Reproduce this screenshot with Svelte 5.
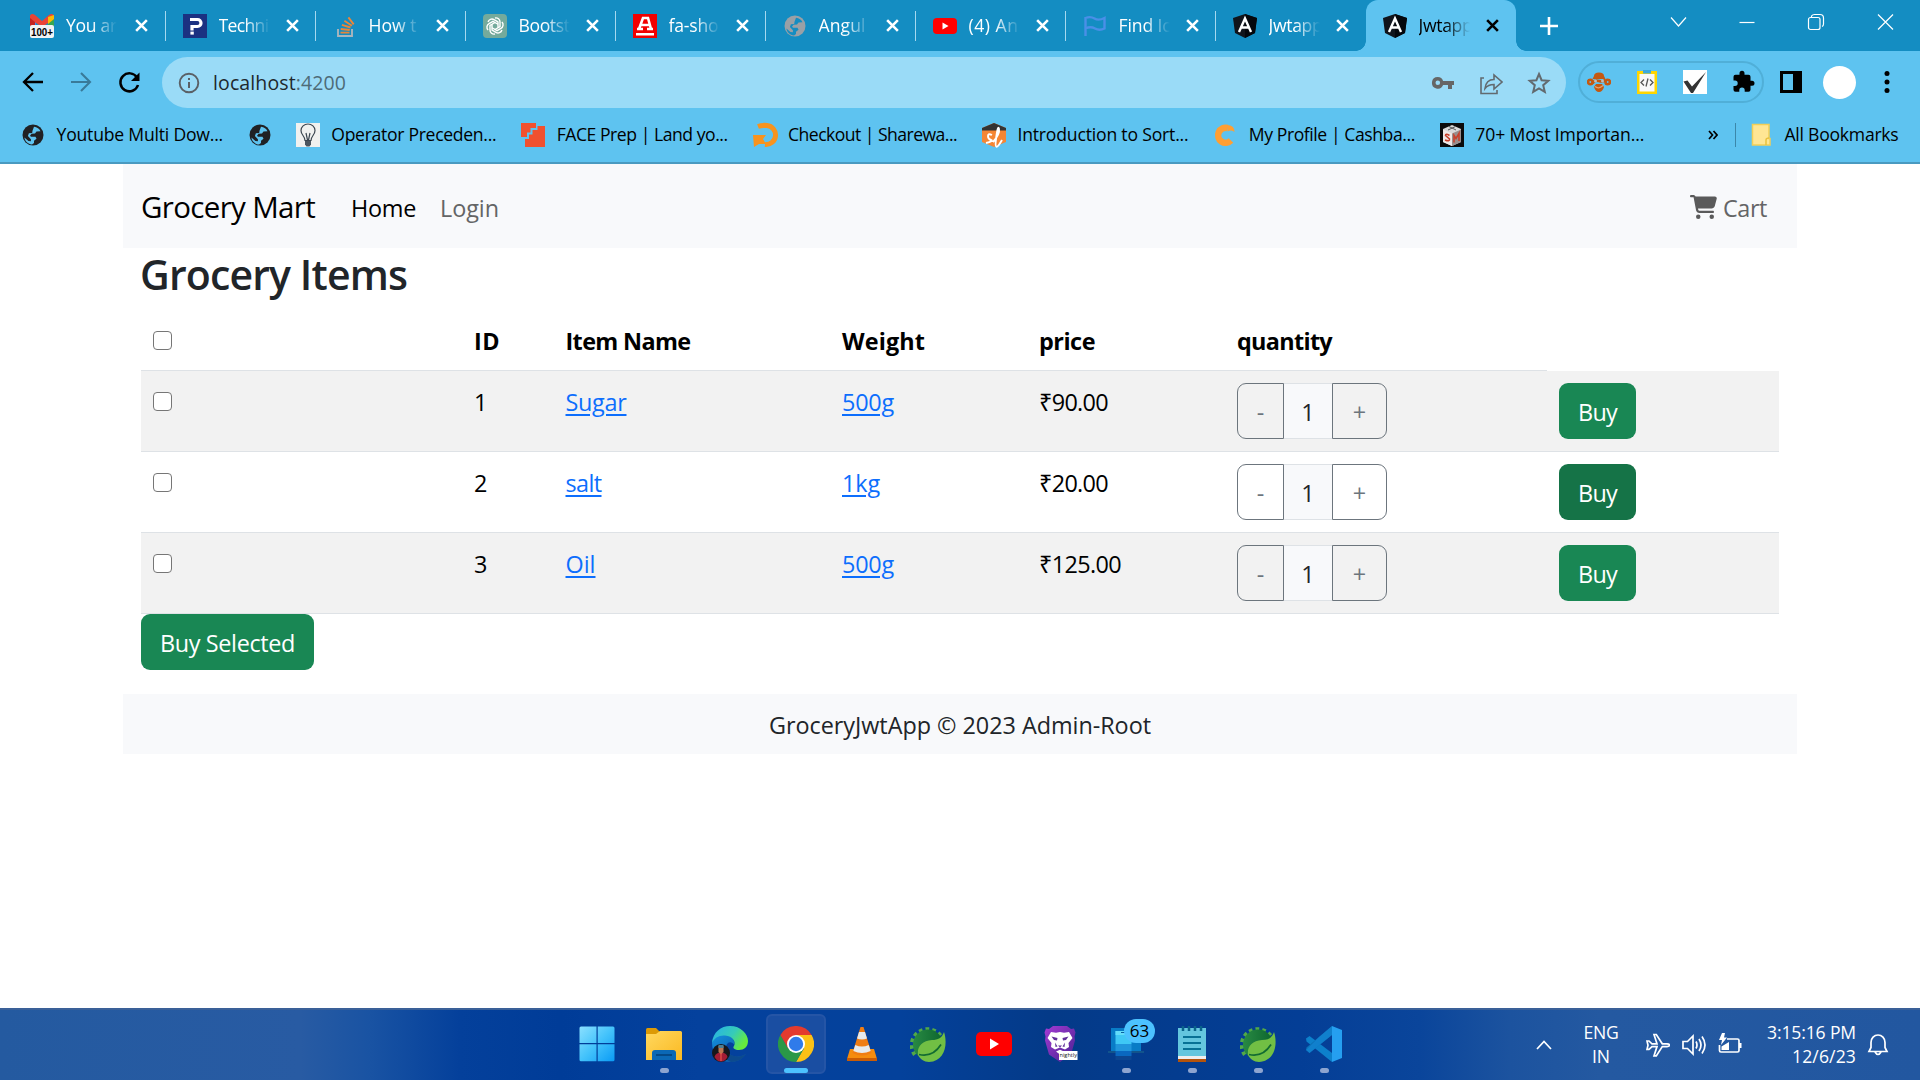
<script lang="ts">
  const tabs = [
    { icon: 'gmail', title: 'You ar', w: 51 },
    { icon: 'prep', title: 'Techni', w: 50 },
    { icon: 'stack', title: 'How t', w: 48 },
    { icon: 'gpt', title: 'Bootst', w: 51 },
    { icon: 'fa', title: 'fa-sho', w: 50 },
    { icon: 'globegrey', title: 'Angul', w: 47 },
    { icon: 'youtube', title: '(4) An', w: 50 },
    { icon: 'flag', title: 'Find Ic', w: 52 },
    { icon: 'angular', title: 'Jwtapp', w: 54 },
    { icon: 'angular', title: 'Jwtapp', w: 54, active: true }
  ];

  const bookmarks = [
    { icon: 'globe', title: 'Youtube Multi Dow...', w: 167.500 },
    { icon: 'globe', title: '', w: 0 },
    { icon: 'bulb', title: 'Operator Preceden...', w: 166 },
    { icon: 'face', title: 'FACE Prep | Land yo...', w: 172 },
    { icon: 'share', title: 'Checkout | Sharewa...', w: 170 },
    { icon: 'sort', title: 'Introduction to Sort...', w: 172 },
    { icon: 'cash', title: 'My Profile | Cashba...', w: 167 },
    { icon: 'stm', title: '70+ Most Importan...', w: 170 }
  ];

  const items = [
    { id: 1, name: 'Sugar', nw: 61, weight: '500g', ww: 52, price: '₹90.00', pw: 69 },
    { id: 2, name: 'salt', nw: 36, weight: '1kg', ww: 38, price: '₹20.00', pw: 69, hover: true },
    { id: 3, name: 'Oil', nw: 30, weight: '500g', ww: 52, price: '₹125.00', pw: 82 }
  ];

  const apps = [
    { icon: 'start' },
    { icon: 'folder', open: true },
    { icon: 'edge' },
    { icon: 'chrome', active: true },
    { icon: 'vlc' },
    { icon: 'spring' },
    { icon: 'yt' },
    { icon: 'brave' },
    { icon: 'phone', open: true, badge: '63' },
    { icon: 'notepad', open: true },
    { icon: 'spring', open: true },
    { icon: 'vscode', open: true }
  ];

  // Spaces the letters so that the label takes the given width.
  function fit(node: HTMLElement, width: number) {
    const n = node.textContent?.trim().length ?? 0;
    if (!n || !width) return;
    const natural = node.getBoundingClientRect().width;
    node.style.letterSpacing = `${(width - natural) / n}px`;
  }
</script>

{#snippet label(text, width)}<span class="fit" use:fit={width}>{text}</span>{/snippet}

{#snippet favicon(name)}
  <svg class="fav" viewBox="0 0 24 24">
    {#if name === 'gmail'}
      <path d="M0 4v8h6V4z" fill="#4285f4" /><path d="M18 4v8h6V4z" fill="#34a853" />
      <path d="M0 1.500Q2-1 5 1l7 6 7-6q3-2 5 .5V5L12 13 0 5z" fill="#ea4335" />
      <path d="M18 3l6-2v4l-6 5z" fill="#fbbc04" /><path d="M0 4l5 4v4H0z" fill="#c5221f" />
      <rect y="11" width="24" height="13" rx="2" fill="#f1f3f4" />
      <text x="12" y="21.800" text-anchor="middle" textLength="22" lengthAdjust="spacingAndGlyphs" class="badge-text">100+</text>
    {:else if name === 'prep'}
      <rect width="24" height="24" fill="#1b3181" />
      <path d="M7 5.500h7.500a3.500 3.500 0 0 1 0 7H9v4" fill="none" stroke="#fff" stroke-width="3.200" /><rect x="7.400" y="17.600" width="3.400" height="3" fill="#fff" />
    {:else if name === 'stack'}
      <path d="M5 15v7h14v-7" fill="none" stroke="#a9b5bd" stroke-width="1.900" />
      <path d="M7.500 18.600h9M7.700 15l9 1M8.900 10.900l8.600 2.600M11.400 6.800l7.500 5M15.400 3.400l5.300 7" stroke="#e98638" stroke-width="1.900" />
    {:else if name === 'gpt'}
      <rect width="24" height="24" rx="4" fill="#74aa9c" />
      <g fill="none" stroke="#fff" stroke-width="1.400">
        {#each [0, 60, 120, 180, 240, 300] as a}
          <path d="M12 4a4 4 0 0 1 5 4v4.500l-5 3" transform="rotate({a} 12 12)" />
        {/each}
      </g>
    {:else if name === 'fa'}
      <rect width="24" height="24" fill="#f20000" />
      <path d="M6 15L10 4h5l3 11M8 11h8M4 15h6M14 15h6" fill="none" stroke="#fff" stroke-width="2.600" /><rect x="3" y="19" width="18" height="2.500" fill="#fff" />
    {:else if name === 'globegrey' || name === 'globe'}
      <circle cx="12" cy="12" r="10.500" fill={name === 'globe' ? '#202124' : '#9aa0a6'} />
      <path d="M13 3.800c3 .2 5.500 2 6.500 4.400l-4 .3-1.500 2-3.500.3-1.500 2 1 1h4.500l1 2-2.500 2v2.300l-2 1.500c-4-.5-7.200-3.300-7.600-7l4 3.400 2.500.2v-2l-3-3.200 1-2.700 3.300-.3.300-2.200z" fill={name === 'globe' ? '#5ec3f0' : '#148dc2'} />
    {:else if name === 'youtube'}
      <rect y="4" width="24" height="16" rx="4" fill="#f00" /><path d="M9.500 8.500v7l6-3.500z" fill="#fff" />
    {:else if name === 'flag'}
      <path d="M2.500 22V3M2.500 4q5-2 9 .5t10-.5v10.500q-5 2.500-9.500 0t-9.500 0" fill="none" stroke="#4a8fe7" stroke-width="2.400" />
    {:else if name === 'angular'}
      <path d="M12 0l12 4-2 15-10 5L2 19 0 4z" fill="#10141b" /><path d="M12 0l12 4-2 15-10 5z" fill="#04070c" />
      <path d="M6 18l6-13.500L18 18M8.500 13.500h7" fill="none" stroke="#fff" stroke-width="2.400" />
    {:else if name === 'bulb'}
      <rect width="24" height="24" fill="#f1f1ef" />
      <path d="M9 17.500C9 13 5 12 5 7.500a7 6.500 0 0 1 14 0C19 12 15 13 15 17.500zM10 10l1.500 7M14 10l-1.500 7" fill="none" stroke="#3c4650" stroke-width="1.200" /><path d="M9 18h6v3.500l-1.500 2h-3L9 21.500z" fill="#4b555e" />
    {:else if name === 'face'}
      <path d="M0 0h15v5H9.500v4.500H6V14H0z" fill="#f1502f" /><path d="M16.500 3H24v21H4v-8h4v-4.500h3.500V7h5z" fill="#f1502f" />
    {:else if name === 'share'}
      <path d="M5 3.500Q9 2 14 2.500A9.300 9.300 0 0 1 12 21.500" fill="none" stroke="#f7931e" stroke-width="5" /><path d="M0 12h13l-3 4 3 5H6l-5 3z" fill="#f7931e" />
    {:else if name === 'sort'}
      <path d="M12 0l12 5v14l-12 5L0 19V5z" fill="#f58634" /><path d="M12 0l12 5v2.500H0V5z" fill="#333" />
      <path d="M10 12q-4-2-4 1t3 4-5 3M11 19q7-8 6-13t-3 10 6 1" fill="none" stroke="#fff" stroke-width="1.900" />
    {:else if name === 'cash'}
      <path d="M18 17.500A7.500 7.500 0 1 1 14.500 5" fill="none" stroke="#ff9f33" stroke-width="6.500" /><path d="M14 2q7.500 0 7.500 7-3.500-2.500-7-.5z" fill="#ff9f33" />
    {:else if name === 'stm'}
      <rect width="24" height="24" fill="#0b0b0b" /><path d="M12 2l9 4v13l-9 4-9-4V6z" fill="#d9d9d9" /><path d="M3 6.500l9 4v12.500l-9-4z" fill="#f0e9e7" /><path d="M12 10.500l9-4V19l-9 4z" fill="#9a8e8c" />
      <path d="M9 3.500l7 3.500M15.500 3.500L8 7" stroke="#555" stroke-width="1" /><path d="M9.500 12.500q-4-2.500-4 0l4 3.500q.5 3-4.500 1M14 19.500v-7l2 3 3-5v7.500" fill="none" stroke="#c9402b" stroke-width="1.600" />
    {/if}
  </svg>
{/snippet}

{#snippet appicon(name)}
  <svg class="app-icon" viewBox="0 0 36 36">
    {#if name === 'start'}
      <defs><linearGradient id="win" x1="0" y1="0" x2="1" y2="1"><stop offset="0" stop-color="#8be0ff" /><stop offset=".5" stop-color="#44c3fb" /><stop offset="1" stop-color="#0a9bf5" /></linearGradient></defs>
      <path d="M2 .5h15.500V17H.5V2Q.5.500 2 .5zM18.700.500H34q1.500 0 1.500 1.500v15H18.700zM.5 18.300h17v17H2q-1.500 0-1.500-1.500zM18.700 18.300h16.800v15.500q0 1.500-1.500 1.500H18.700z" fill="url(#win)" />
    {:else if name === 'folder'}
      <defs><linearGradient id="fold" x1="0" y1="0" x2="1" y2="1"><stop offset="0" stop-color="#ffd860" /><stop offset="1" stop-color="#fbb921" /></linearGradient></defs>
      <path d="M0 3.500Q0 2 1.500 2H10l4 4v6H0z" fill="#dc9a06" /><path d="M0 8h10l4-3h20.500Q36 5 36 6.500V34H0z" fill="url(#fold)" />
      <path d="M6 34v-7q0-3 3-3h18q3 0 3 3v7z" fill="#0b68b5" /><path d="M10 29h16" stroke="#053f77" stroke-width="1.500" />
    {:else if name === 'edge'}
      <defs>
        <linearGradient id="edge1" x1="0" y1="0" x2="1" y2=".5"><stop offset="0" stop-color="#26b0ea" /><stop offset=".6" stop-color="#36cbb8" /><stop offset="1" stop-color="#66eb3d" /></linearGradient>
        <linearGradient id="edge2" x1="0" y1="0" x2="1" y2="1"><stop offset="0" stop-color="#1490df" /><stop offset="1" stop-color="#0b4f9c" /></linearGradient>
      </defs>
      <path d="M0 17C1 9 7 8.500 12 8.500c8 0 11 6 10 10-3-4-8-2-8 3 0 6 7 10 13 9 3-.4 5-1.500 7-2.500-3 5-9 8-16 8C8 36 0 28 0 17z" fill="url(#edge2)" />
      <path d="M14 21c0 6 6 10 13 9.500 3-.4 5-1.500 7-2.500-3 5-9 8-15 8-6-2-8-9-5-15z" fill="#0c4a8e" />
      <path d="M0 17C1 6 9 0 18 0c11 0 18 8 18 15 0 6-4 9-9 9-4 0-7-2-5-4 2-4-1-10-9-10.500C7 9 2 12 0 17z" fill="url(#edge1)" />
      <circle cx="9" cy="27" r="9" fill="#17171b" /><path d="M2.500 31q1-4.500 6.500-4.500t6.500 4.500q-2.500 4.500-6.500 4.500T2.500 31z" fill="#a31d35" /><path d="M6.500 20h5v6L9 28.500 6.500 26z" fill="#bc7650" /><path d="M6.500 19h5v3h-5z" fill="#4b7e94" /><path d="M9 27v8" stroke="#e9554b" stroke-width="1.200" />
    {:else if name === 'chrome'}
      <path d="M18 9h15.600A18 18 0 0 1 18 36l7.800-13.500z" fill="#fbc116" /><path d="M25.800 22.500L18 36A18 18 0 0 1 2.400 9l7.800 13.500z" fill="#2a9847" /><path d="M18 9h15.600A18 18 0 0 0 2.400 9l7.800 13.500z" fill="#e33b2e" />
      <circle cx="18" cy="18" r="9" fill="#fff" /><circle cx="18" cy="18" r="7.200" fill="#2f7bea" />
    {:else if name === 'vlc'}
      <path d="M6 23h24l3 10q.3 2-2 2H5q-2.300 0-2-2z" fill="#f58c0e" /><path d="M3 32h30v3H3z" fill="#ca5c05" />
      <path d="M16.500 1h3l8 26q-9.500 5-19 0z" fill="#f07d13" /><path d="M15 6h6l2 6.500q-5 2-10 0zM11.300 19q6.700 3 13.400 0l2 6q-8.700 4-17.400 0z" fill="#e7eaec" />
    {:else if name === 'spring'}
      <defs><linearGradient id="gear" x1="0" y1="0" x2="1" y2="0"><stop offset="0" stop-color="#288a43" /><stop offset="1" stop-color="#0d652e" /></linearGradient></defs>
      <path d="M30.500 9.500A15.500 15.500 0 1 0 5 29" fill="none" stroke="#52a947" stroke-width="4" stroke-dasharray="3.600 3" />
      <circle cx="18" cy="18.500" r="15" fill="url(#gear)" />
      <path d="M34 6c4 12 1 29-15 30-5 0-9-3-11-7C7 20 12 15 22 14c6 0 10-2 12-8z" fill="#71bf44" /><path d="M9 28.500c9 2 17-2 22-10" fill="none" stroke="#126b31" stroke-width="1.700" />
    {:else if name === 'yt'}
      <rect y="6" width="36" height="24" rx="5" fill="#f00" /><path d="M14 12.500v11l9-5.500z" fill="#fff" />
    {:else if name === 'brave'}
      <defs><linearGradient id="brv" x1="0" y1="0" x2="1" y2="1"><stop offset="0" stop-color="#a43bd4" /><stop offset="1" stop-color="#482290" /></linearGradient></defs>
      <path d="M11 0h14l4 3 3-.5 1.500 4-1 4 .5 4-4 14-11 7.500L7 28.500 3 14.500l.5-4-1-4 1.500-4L7 3z" fill="url(#brv)" />
      <path d="M9 6l5 .8 4-.8 4 .8 5-.8 3.500 6-4 5 .5 4-4 2.500-5-2-5 2L9 21l.5-4-4-5zM14 25.500l4-1.700 4 1.700-4 3z" fill="#fff" />
      <path d="M9.500 10.500l6 1.500-.5 2.500-3-.5zM26.500 10.500l-6 1.500.5 2.500 3-.5zM13 16.500l2.500 4-2 .5zM23 16.500l-2.500 4 2 .5zM16 19.500h4l-2 2z" fill="#62309b" />
      <rect x="17" y="25" width="18.500" height="9" fill="#fff" /><text x="26.300" y="31.300" text-anchor="middle" class="nightly">nightly</text>
    {:else if name === 'phone'}
      <path d="M3 2h30v24H3z" fill="#087cc7" /><path d="M0 25h36v2H0z" fill="#12548c" /><path d="M7.500 5h16v13h-16z" fill="#3fc8f5" /><path d="M7.500 5h16v4h-16z" fill="#63dcfa" /><path d="M7.500 18h16v7h-16z" fill="#2196dc" /><path d="M7.500 25h16v5h-16z" fill="#0a68c0" /><path d="M7.500 30h16v4h-16z" fill="#0c4590" /><path d="M13 6.500h5" stroke="#0b5f9e" />
    {:else if name === 'notepad'}
      <path d="M4 2h28v29H4z" fill="#64c6de" /><path d="M4 30h28v3H4z" fill="#eee" /><path d="M4 33h28v3H4z" fill="#b4530b" />
      <path d="M9 0v5M15 0v5M21 0v5M27 0v5" stroke="#096389" stroke-width="2.500" /><path d="M9 11h18M9 17h18M9 23h18" stroke="#087195" stroke-width="2" />
    {:else if name === 'vscode'}
      <path d="M0 12.500l3.500-2.500L26 27v9L.5 15.500z" fill="#0d80cb" /><path d="M.5 21.500L26 0v9L3.500 27 0 24z" fill="#0b70b6" /><path d="M0 24l3.500 3L26 9V0L13 11z" fill="#148bdc" opacity=".6" /><path d="M26 0l10 4v28l-10 4z" fill="#259ff0" />
    {/if}
  </svg>
{/snippet}

<div class="screen">
  <div class="tabstrip">
    {#each tabs as tab}
      <div class="tab" class:active={tab.active}>
        {@render favicon(tab.icon)}
        <div class="tab-title">{@render label(tab.title, tab.w)}</div>
        <svg class="close" viewBox="0 0 14 14"><path d="M2 2l10 10M12 2L2 12" stroke="currentColor" stroke-width="2.400" /></svg>
      </div>
    {/each}
    <svg class="plus" viewBox="0 0 18 18"><path d="M9 0v18M0 9h18" stroke="#fff" stroke-width="2.600" /></svg>
    <div class="window-controls">
      <svg viewBox="0 0 18 18"><path d="M2 4.500L9.500 13 17 4.500" /></svg>
      <svg viewBox="0 0 18 18"><path d="M1.500 9.500h15" /></svg>
      <svg viewBox="0 0 18 18"><rect x="1.500" y="4.500" width="11.500" height="12" rx="2" /><path d="M4.500 4V3q1-1.500 3-1.500h5.500q3.500 0 3.500 3.500v6q0 2-1.500 2.500" /></svg>
      <svg viewBox="0 0 18 18"><path d="M2 1.500l15 15M17 1.500l-15 15" /></svg>
    </div>
  </div>

  <div class="toolbar">
    <div class="nav-buttons">
      <svg viewBox="0 0 24 24"><path d="M22 12H3.500M12 3l-9 9 9 9" fill="none" stroke="#000" stroke-width="2.300" /></svg>
      <svg viewBox="0 0 24 24"><path d="M2 12h18.500M12 3l9 9-9 9" fill="none" stroke="#397a99" stroke-width="2.100" /></svg>
      <svg viewBox="0 0 24 24"><path d="M21 15a9 9 0 1 1-1-7.500" fill="none" stroke="#000" stroke-width="2.500" /><path d="M22.500 2.500V11H14z" /></svg>
    </div>
    <div class="omnibox">
      <svg class="i24" viewBox="0 0 24 24"><circle cx="12" cy="12" r="9.300" fill="none" stroke="#5a6066" stroke-width="1.900" /><path d="M12 11v6M12 7v2" stroke="#5a6066" stroke-width="2" /></svg>
      <div class="url"><span class="fit" use:fit={133}>localhost<i>:4200</i></span></div>
      <div class="omni-actions">
        <svg class="i24" viewBox="0 0 24 24"><path d="M6.800 6a5.700 5.700 0 0 1 5.300 4H23v4h-2v4h-4v-4h-4.900A5.800 5.800 0 1 1 6.800 6zm0 3.500a2.300 2.300 0 1 0 0 4.600 2.300 2.300 0 0 0 0-4.600z" fill="#666" fill-rule="evenodd" /></svg>
        <svg class="i24" viewBox="0 0 24 24"><path d="M5 7H2v15.500h16V19M6 17.500q1-9 9-9V4l8 7-8 7v-4.500q-6 0-9 4z" fill="none" stroke="#626a6f" stroke-width="1.600" /></svg>
        <svg class="i24" viewBox="0 0 24 24"><path d="M12 3l2.600 6.200 6.700.6-5.100 4.400 1.600 6.600-5.800-3.500-5.800 3.500 1.600-6.600-5.100-4.400 6.700-.6z" fill="none" stroke="#626a6f" stroke-width="2" /></svg>
      </div>
    </div>
    <div class="extensions">
      <svg class="i24" viewBox="0 0 24 24"><path d="M7 6q0-3.500 5-3.500T17 6l1.500 3h-13zM7 17q1.500 5 5 5t5-5l-2-3H9z" fill="#c45911" /><g fill="none" stroke="#c45911" stroke-width="2.600"><circle cx="3.300" cy="12" r="2.200" /><circle cx="20.700" cy="12" r="2.200" /><path d="M5.500 13.500q2-4 6.500-2.500t6.500-1.500" /></g><circle cx="8.500" cy="11" r="1.500" fill="#b9bfc0" /><circle cx="15.500" cy="11" r="1.500" fill="#b9bfc0" /><path d="M8 16.500q4 3 8-1" fill="none" stroke="#e1a272" stroke-width="1.200" /></svg>
      <svg class="i24" viewBox="0 0 24 24"><path d="M2 1h20v23H2z" fill="#ffd500" /><path d="M4.500 4h15v17.500h-15z" fill="#f8f8f8" /><path d="M8 0h8v3.500H8z" fill="#3aa9e0" /><path d="M9 9.500L6 12.500l3 3M15 9.500l3 3-3 3M13 8.500l-2 8" fill="none" stroke="#555" stroke-width="1.300" /></svg>
      <svg class="i24" viewBox="0 0 24 24"><path d="M0 0h24v24H0z" fill="#fff" /><path d="M.5 11.500l4-1 4.500 6L23 2 10 23H8z" fill="#333" /></svg>
      <svg class="i24" viewBox="0 0 24 24"><path d="M20.500 11H19V7a2 2 0 0 0-2-2h-4V3.500a2.500 2.500 0 0 0-5 0V5H4a2 2 0 0 0-2 2v3.800h1.500a2.700 2.700 0 0 1 0 5.400H2V20a2 2 0 0 0 2 2h3.800v-1.500a2.700 2.700 0 0 1 5.400 0V22H17a2 2 0 0 0 2-2v-4h1.500a2.500 2.500 0 0 0 0-5z" transform="translate(.5 -.3)" /></svg>
    </div>
    <svg class="i24 side" viewBox="0 0 24 24"><path d="M1 1h22v22H1zM4 4v16h10V4z" fill-rule="evenodd" /></svg>
    <div class="avatar"></div>
    <svg class="i24 more" viewBox="0 0 24 24"><circle cx="12" cy="3.500" r="2.500" /><circle cx="12" cy="12" r="2.500" /><circle cx="12" cy="20.500" r="2.500" /></svg>
  </div>

  <div class="bookmarks">
    {#each bookmarks as b}
      <div class="bookmark">
        {@render favicon(b.icon)}
        {#if b.title}<div class="bm-title" style:width="{b.w}px">{@render label(b.title, b.w - 1)}</div>{/if}
      </div>
    {/each}
    <div class="all-bookmarks">
      <svg class="dbl" viewBox="0 0 10 10"><path d="M1 1l3.500 4L1 9M5.500 1L9 5 5.500 9" fill="none" stroke="#000" stroke-width="1.700" /></svg>
      <div class="bm-sep"></div>
      <svg class="i24" viewBox="0 0 24 24"><path d="M3.500 1.500h16.500v14h1v6.500H3.500z" fill="#ffe694" stroke="#f2cf57" stroke-width="1.500" /><path d="M17 22v-5q0-2 3-2" fill="none" stroke="#e9c23e" stroke-width="1.500" /></svg>
      <div class="bm-title">{@render label('All Bookmarks', 114)}</div>
    </div>
  </div>

  <main>
    <nav>
      <span class="brand">{@render label('Grocery Mart', 174)}</span>
      <span class="nav-link on">{@render label('Home', 65)}</span>
      <span class="nav-link">{@render label('Login', 59)}</span>
      <span class="nav-link cart">
        <svg viewBox="0 0 576 512"><path fill="#5a5a5a" d="M0 24C0 10.700 10.700 0 24 0h45.500c22 0 41.500 12.800 50.600 32h411c26.300 0 45.500 25 38.600 50.400l-41 152.300c-8.500 31.400-37 53.300-69.500 53.300H170.700l5.400 28.500c2.200 11.300 12.100 19.500 23.600 19.500H488c13.300 0 24 10.700 24 24s-10.700 24-24 24H199.700c-34.600 0-64.300-24.600-70.700-58.500L77.400 54.500c-.7-3.800-4-6.500-7.900-6.500H24C10.700 48 0 37.300 0 24zM128 464a48 48 0 1 1 96 0 48 48 0 1 1-96 0zm336-48a48 48 0 1 1 0 96 48 48 0 1 1 0-96z" /></svg>
        {@render label('Cart', 44)}
      </span>
    </nav>

    <section>
      <h3>{@render label('Grocery Items', 267)}</h3>
      <div class="row head">
        <div class="cell"><input type="checkbox" /></div>
        <div class="cell id">{@render label('ID', 26)}</div>
        <div class="cell">{@render label('Item Name', 125)}</div>
        <div class="cell">{@render label('Weight', 83)}</div>
        <div class="cell">{@render label('price', 56)}</div>
        <div class="cell">{@render label('quantity', 95)}</div>
      </div>
      {#each items as item, i}
        <div class="row" class:striped={i % 2 === 0}>
          <div class="cell"><input type="checkbox" /></div>
          <div class="cell id">{item.id}</div>
          <div class="cell"><span class="fit link" use:fit={item.nw}>{item.name}</span></div>
          <div class="cell"><span class="fit link" use:fit={item.ww}>{item.weight}</span></div>
          <div class="cell">{@render label(item.price, item.pw)}</div>
          <div class="cell ctl">
            <div class="stepper"><button class="minus">-</button><div class="count">1</div><button class="add">+</button></div>
          </div>
          <div class="cell ctl"><button class="btn" class:hover={item.hover}>{@render label('Buy', 39)}</button></div>
        </div>
      {/each}
      <button class="btn wide">{@render label('Buy Selected', 135)}</button>
    </section>

    <footer>{@render label('GroceryJwtApp © 2023 Admin-Root', 382)}</footer>
  </main>

  <div class="taskbar">
    <div class="apps">
      {#each apps as app}
        <div class="app" class:active={app.active} class:open={app.open}>
          {@render appicon(app.icon)}
          {#if app.badge}<span class="badge">{app.badge}</span>{/if}
        </div>
      {/each}
    </div>
    <div class="tray">
      <svg class="up" viewBox="0 0 16 10"><path d="M1 9l7-7.500L15 9" /></svg>
      <div class="lang"><span>{@render label('ENG', 35)}</span><span>{@render label('IN', 18)}</span></div>
      <div class="status">
        <svg viewBox="0 0 24 24"><path d="M1 8h2l3 2.800h5L8 1.500h2.300l6 9.300H21q2.500.2 2.500 1.400T21 13.600h-4.700l-6 9.300H8l3-9.300H6L3 16.400H1l1-4.200z" /></svg>
        <svg viewBox="0 0 24 24"><path d="M1 8.500h4.500L11 3v18l-5.500-5.500H1zM14 8.500q2 3.500 0 7M17 6q4 6 0 12M20 3.500q6 8.500 0 17" /></svg>
        <svg viewBox="0 0 24 24"><path d="M9 6h10.500q1.500 0 1.500 1.500v10q0 1.500-1.500 1.500H3q-1.500 0-1.500-1.500V12" /><path d="M21 10h2.500v5H21zM3.500 17V13.500L11 9v8zM4 0h3L6 4.500h3L3 12l1-5H1z" fill="#fff" stroke="none" /></svg>
      </div>
      <div class="clock"><span>{@render label('3:15:16 PM', 89)}</span><span>{@render label('12/6/23', 64)}</span></div>
      <svg class="bell" viewBox="0 0 22 24"><path d="M2 18.500l2-4V9.500a7 7.500 0 0 1 14 0v5l2 4zM8 19q3 5 6 0" /></svg>
    </div>
  </div>
</div>

<style>
  :global(body) { margin: 0; background: #fff; overflow: hidden; }
  .screen { width: 1920px; height: 1080px; display: flex; flex-direction: column; font-family: 'Open Sans', 'Noto Sans', sans-serif; font-size: 17.600px; color: #000; }
  svg { display: block; flex: none; }
  .fit { display: inline-block; white-space: nowrap; }
  .i24, .fav { width: 24px; height: 24px; }
  .fav { overflow: visible; }
  .badge-text { font: 700 11px 'Liberation Sans', sans-serif; fill: #000; }
  .nightly { font: 5.600px 'Open Sans', sans-serif; fill: #111; }

  .tabstrip { height: 51px; flex: none; background: #148dc2; display: flex; align-items: center; padding-left: 16px; color: #fff; }
  .tab { position: relative; box-sizing: border-box; width: 150px; height: 51px; display: flex; align-items: center; padding-left: 16.500px; }
  .tab:first-child { padding-left: 14px; }
  .tab:first-child .close { margin-left: 13px; }
  .tab:not(.active)::after { content: ''; position: absolute; right: 0; top: 11px; width: 1.500px; height: 30px; background: #a5d8ef; }
  .tab:nth-child(9)::after { display: none; }
  .tab.active { background: #5ec3f0; color: #000; border-radius: 12px 12px 0 0; }
  .tab.active::before { content: ''; position: absolute; left: -10px; right: -10px; bottom: 0; height: 10px; background: radial-gradient(circle at 0 0, transparent 9.500px, #5ec3f0 10px) left / 10px 10px no-repeat, radial-gradient(circle at 100% 0, transparent 9.500px, #5ec3f0 10px) right / 10px 10px no-repeat; }
  .tab-title { width: 55px; margin-left: 12px; padding-bottom: 1.500px; mask-image: linear-gradient(90deg, #000 26px, transparent 51px); }
  .close { width: 15px; height: 15px; margin-left: 11.500px; }
  .plus { width: 18px; height: 18px; margin-left: 24px; }
  .window-controls { margin-left: auto; margin-right: 26px; display: flex; gap: 51px; padding-bottom: 8px; }
  .window-controls svg { width: 18px; height: 18px; fill: none; stroke: #fff; stroke-width: 1.200; }

  .toolbar { height: 62px; flex: none; background: #5ec3f0; display: flex; align-items: center; }
  .nav-buttons { display: flex; gap: 24px; padding-left: 21px; width: 141px; }
  .nav-buttons svg { width: 24px; height: 24px; }
  .omnibox { width: 1404px; height: 51px; box-sizing: border-box; border-radius: 26px; background: #9adbf7; display: flex; align-items: center; padding: 0 15px; margin-top: 1px; }
  .url { margin-left: 12px; margin-top: -1px; font-size: 19.500px; color: #20282c; }
  .url i { font-style: normal; color: #4d6b78; }
  .omni-actions { margin-left: auto; display: flex; gap: 24px; }
  .extensions { box-sizing: border-box; width: 186px; height: 42px; margin-left: 12px; border: 2px solid #50afd8; border-radius: 21px; display: flex; align-items: center; gap: 24px; padding-left: 7px; }
  .side { margin-left: 15px; }
  .avatar { width: 33px; height: 33px; border-radius: 50%; background: #fff; margin-left: 20px; }
  .more { margin-left: 19px; }

  .bookmarks { height: 51px; flex: none; box-sizing: border-box; border-bottom: 2px solid #4a9ac0; background: #5ec3f0; display: flex; align-items: center; gap: 23.900px; padding: 0 21.500px 6px 21px; }
  .bookmark, .all-bookmarks { display: flex; align-items: center; gap: 11.500px; }
  .bm-title { white-space: nowrap; padding-bottom: 1px; }
  .all-bookmarks { margin-left: auto; }
  .dbl { width: 10px; height: 10px; margin-right: 5px; }
  .bm-sep { width: 1px; height: 24px; background: #3b87aa; margin-right: 2px; }

  main { flex: 1; width: 1674px; margin: 0 auto; color: #212529; font-size: 23.400px; line-height: 36px; }
  nav { height: 84px; box-sizing: border-box; background: #f8f9fb; display: flex; align-items: center; padding: 2px 30px 0 18px; }
  .brand { font-size: 29.500px; color: #000; margin-right: 36px; }
  .nav-link { color: #646566; margin-right: 24px; padding-top: 1px; }
  .nav-link.on { color: #000; }
  .nav-link.cart { margin-left: auto; margin-right: 0; display: flex; align-items: center; gap: 6px; }
  .cart svg { width: 27px; height: 24px; margin-top: -2px; }
  section { margin: 0 18px; }
  h3 { margin: 0 0 0 -1px; padding: 1px 0 11px; font-size: 41px; line-height: 50px; font-weight: 600; }
  .row { display: grid; grid-template-columns: 322px 90.500px 276.500px 197px 198px 322px 232px; height: 81px; color: #000; }
  .row.head { height: 61px; font-weight: 700; }
  .cell { box-sizing: border-box; border-bottom: 1px solid #dee2e6; padding: 13px 12px 0; }
  .cell.id { padding-left: 11px; }
  .striped .cell { background: #f2f2f2; }
  .cell.ctl { padding-top: 12px; }
  input { display: block; appearance: none; box-sizing: border-box; width: 19px; height: 19px; margin: 7.500px 0 0 0; border: 1.500px solid #767676; border-radius: 4px; background: #fff; }
  .link { color: #0d6efd; text-decoration: underline; text-decoration-thickness: 2px; text-underline-offset: 2.500px; line-height: 36px; }
  button { font: inherit; }
  .btn { box-sizing: border-box; height: 56px; width: 77px; padding: 2px 0 0; border: 0; border-radius: 9px; background: #198754; color: #fff; display: block; }
  .btn.hover { background: #157347; }
  .btn.wide { width: 173px; }
  .stepper { display: flex; height: 56px; width: 150px; }
  .stepper button, .count { box-sizing: border-box; padding: 2px 0 0; text-align: center; }
  .stepper button { border: 1px solid #6c757d; background: transparent; color: #6c757d; }
  .minus { width: 47px; border-radius: 9px 0 0 9px; }
  .add { width: 55px; border-radius: 0 9px 9px 0; }
  .count { width: 48px; background: #f8f9fb; border: 1px solid #dee2e6; border-width: 1px 0; line-height: 52px; color: #212529; }
  footer { height: 60px; box-sizing: border-box; margin-top: 24px; padding-top: 13px; background: #f8f9fb; text-align: center; }

  .taskbar { position: relative; height: 72px; flex: none; box-sizing: border-box; border-top: 2px solid #3a6098; display: flex; justify-content: space-between; padding-left: 567px; background: linear-gradient(90deg, #245aa0 0, #285ba3 300px, #1953a3 370px, #04409b 460px, #003c98 560px, #04419d 700px, #04419b 900px, #043a88 1050px, #043e96 1300px, #0a459b 1420px, #1c539f 1510px, #2459a1 1600px, #2257a0 1920px) 0 0 / 100% 100%; color: #fff; }
  .apps { display: flex; gap: 6px; padding-top: 4px; }
  .app { position: relative; box-sizing: border-box; width: 60px; height: 60px; border-radius: 6px; display: flex; justify-content: center; padding-top: 12px; }
  .app:first-child { margin-right: 1px; }
  .app-icon { width: 36px; height: 36px; }
  .app.active { background: #1a4ea2; border: 2px solid #2555a6; padding-top: 10px; }
  .app.open::after, .app.active::after { content: ''; position: absolute; bottom: 1px; left: 26px; width: 9px; height: 5px; border-radius: 3px; background: #8da4d0; }
  .app.active::after { left: 16px; width: 24px; bottom: -1px; background: #4cc2ff; }
  .badge { position: absolute; left: 28px; top: 5px; width: 31px; height: 24px; border-radius: 12px; background: #4cc2ff; color: #000; font-size: 17px; line-height: 24px; text-align: center; }
  .tray { display: flex; align-items: center; padding-right: 31px; }
  .tray svg { fill: none; stroke: #fff; stroke-width: 1.700; }
  .up { width: 16px; height: 10px; margin-right: 31px; }
  .lang, .clock { display: flex; flex-direction: column; align-items: center; line-height: 24px; padding-bottom: 2px; }
  .lang { width: 36px; }
  .status { display: flex; gap: 12px; margin-left: 27px; }
  .status svg { width: 24px; height: 24px; }
  .clock { width: 90px; align-items: flex-end; margin-left: 24px; }
  .bell { width: 22px; height: 24px; margin-left: 11px; }
</style>
